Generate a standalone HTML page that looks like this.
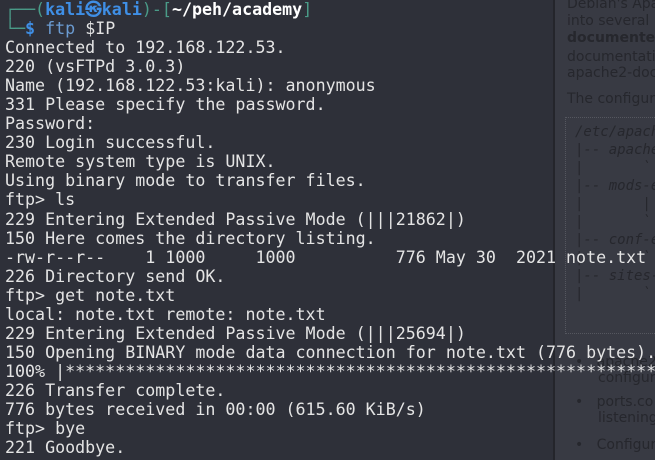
<!DOCTYPE html>
<html><head><meta charset="utf-8"><style>
html,body{margin:0;padding:0;width:655px;height:460px;overflow:hidden;background:#2e3039}
#panel{position:absolute;left:553px;top:0;width:102px;height:460px;background:#383a43;border-left:2px solid #24252b;font-family:"DejaVu Sans",sans-serif;font-size:14px;color:#26272d;overflow:hidden}
#panel div{position:absolute;left:12px;white-space:pre}
.box{position:absolute;left:10px;top:117px;width:200px;height:215px;border:1px dotted #55575f}
.mono{font-family:"DejaVu Sans Mono",monospace;font-style:italic;font-size:14px}
#term{position:absolute;left:5px;top:0px;width:650px;height:460px;overflow:hidden;font-family:"DejaVu Sans Mono",monospace;font-size:16.65px;line-height:19.05px;color:#e4e4e4;white-space:pre}
.g{color:#4a9b88}.b{color:#3f8fe6;font-weight:bold}.w{color:#fff;font-weight:bold}.c{color:#6b9bd1}
</style></head><body>
<div id="panel">
<div style="top:-4px">Debian's Apache</div>
<div style="top:13px">into several</div>
<div style="top:30px;font-weight:bold">documented</div>
<div style="top:49px">documentation</div>
<div style="top:65px">apache2-doc</div>
<div style="top:91px">The configuration</div>
<span class="box"></span>
<div class="mono" style="top:124px;left:20px">/etc/apache2/</div>
<div class="mono" style="top:142px;left:20px">|-- apache2</div>
<div class="mono" style="top:160px;left:20px">|       `</div>
<div class="mono" style="top:178px;left:20px">|-- mods-e</div>
<div class="mono" style="top:196px;left:20px">|       |</div>
<div class="mono" style="top:214px;left:20px">|       `</div>
<div class="mono" style="top:232px;left:20px">|-- conf-e</div>
<div class="mono" style="top:250px;left:20px">|       `</div>
<div class="mono" style="top:268px;left:20px">|-- sites-</div>
<div class="mono" style="top:286px;left:20px">|       `</div>
<div style="top:354px;left:20px">•   apache2</div>
<div style="top:370px;left:43px">configura</div>
<div style="top:394px;left:20px">•   ports.co</div>
<div style="top:410px;left:43px">listening</div>
<div style="top:437px;left:20px">•   Configur</div>
</div>
<div id="term"><span class="g">┌──(</span><span class="b">kali㉿kali</span><span class="g">)-[</span><span class="w">~/peh/academy</span><span class="g">]</span>
<span class="g">└─</span><span class="b">$</span> <span class="c">ftp</span> $IP
Connected to 192.168.122.53.
220 (vsFTPd 3.0.3)
Name (192.168.122.53:kali): anonymous
331 Please specify the password.
Password:
230 Login successful.
Remote system type is UNIX.
Using binary mode to transfer files.
ftp&gt; ls
229 Entering Extended Passive Mode (|||21862|)
150 Here comes the directory listing.
-rw-r--r--    1 1000     1000          776 May 30  2021 note.txt
226 Directory send OK.
ftp&gt; get note.txt
local: note.txt remote: note.txt
229 Entering Extended Passive Mode (|||25694|)
150 Opening BINARY mode data connection for note.txt (776 bytes).
100% |*****************************************************************
226 Transfer complete.
776 bytes received in 00:00 (615.60 KiB/s)
ftp&gt; bye
221 Goodbye.</div>
</body></html>
